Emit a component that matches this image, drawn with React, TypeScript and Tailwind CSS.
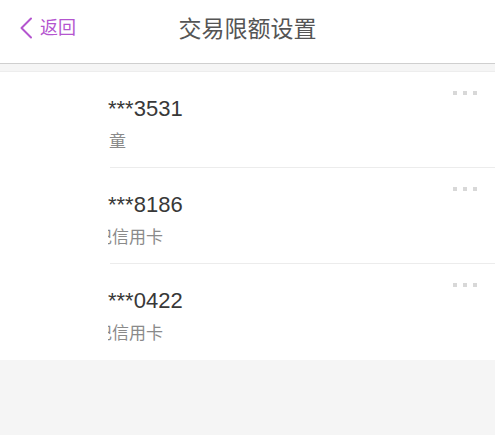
const cards = [
  { id: "3531", number: "***3531", label: "童", shift: "ml-[1px]" },
  { id: "8186", number: "***8186", label: "贷记信用卡", shift: "ml-[-30px]" },
  { id: "0422", number: "***0422", label: "贷记信用卡", shift: "ml-[-30px]" },
];

function MoreDots() {
  return (
    <div className="flex items-center gap-[6px]">
      <span className="h-[4px] w-[4px] bg-[#d8d8d8]" />
      <span className="h-[4px] w-[4px] bg-[#d8d8d8]" />
      <span className="h-[4px] w-[4px] bg-[#d8d8d8]" />
    </div>
  );
}

function CardRow({
  number,
  label,
  shift,
  last,
}: {
  number: string;
  label: string;
  shift: string;
  last: boolean;
}) {
  return (
    <div className="relative h-[96px] pl-[108px]">
      <div className="absolute right-[18px] top-[19px]">
        <MoreDots />
      </div>
      <div className="overflow-hidden pt-[24px]">
        <p className="text-[22px] leading-[26px] text-[#383838]">{number}</p>
        <p className={`mt-[8px] whitespace-nowrap text-[17px] leading-[24px] text-[#8a8a8a] ${shift}`}>
          {label}
        </p>
      </div>
      {!last ? (
        <div className="absolute bottom-0 left-[110px] right-0 h-px bg-[#ececec]" />
      ) : null}
    </div>
  );
}

export default function App() {
  return (
    <div
      className="min-h-[435px] bg-[#f5f5f5]"
      style={{ fontFamily: '"Liberation Sans", "Noto Sans CJK SC", sans-serif' }}
    >
      <header className="relative flex h-[64px] items-start justify-center border-b border-[#cfcfcf] bg-white pt-[15px]">
        <button className="absolute left-[19px] top-[17px] flex items-center gap-[7px] text-[#b455cf]">
          <svg width="14" height="22" viewBox="0 0 14 22" fill="none">
            <path d="M12 1.5 L2.5 11 L12 20.5" stroke="#b455cf" strokeWidth="2" strokeLinecap="round" strokeLinejoin="round" />
          </svg>
          <span className="text-[18px] leading-[22px]">返回</span>
        </button>
        <h1 className="text-[23px] leading-[28px] text-[#555555]">交易限额设置</h1>
      </header>

      <div className="h-[8px] border-b border-[#ededed] bg-[#f5f5f5]" />

      <section className="bg-white">
        {cards.map((card, i) => (
          <CardRow
            key={card.id}
            number={card.number}
            label={card.label}
            shift={card.shift}
            last={i === cards.length - 1}
          />
        ))}
      </section>
    </div>
  );
}
